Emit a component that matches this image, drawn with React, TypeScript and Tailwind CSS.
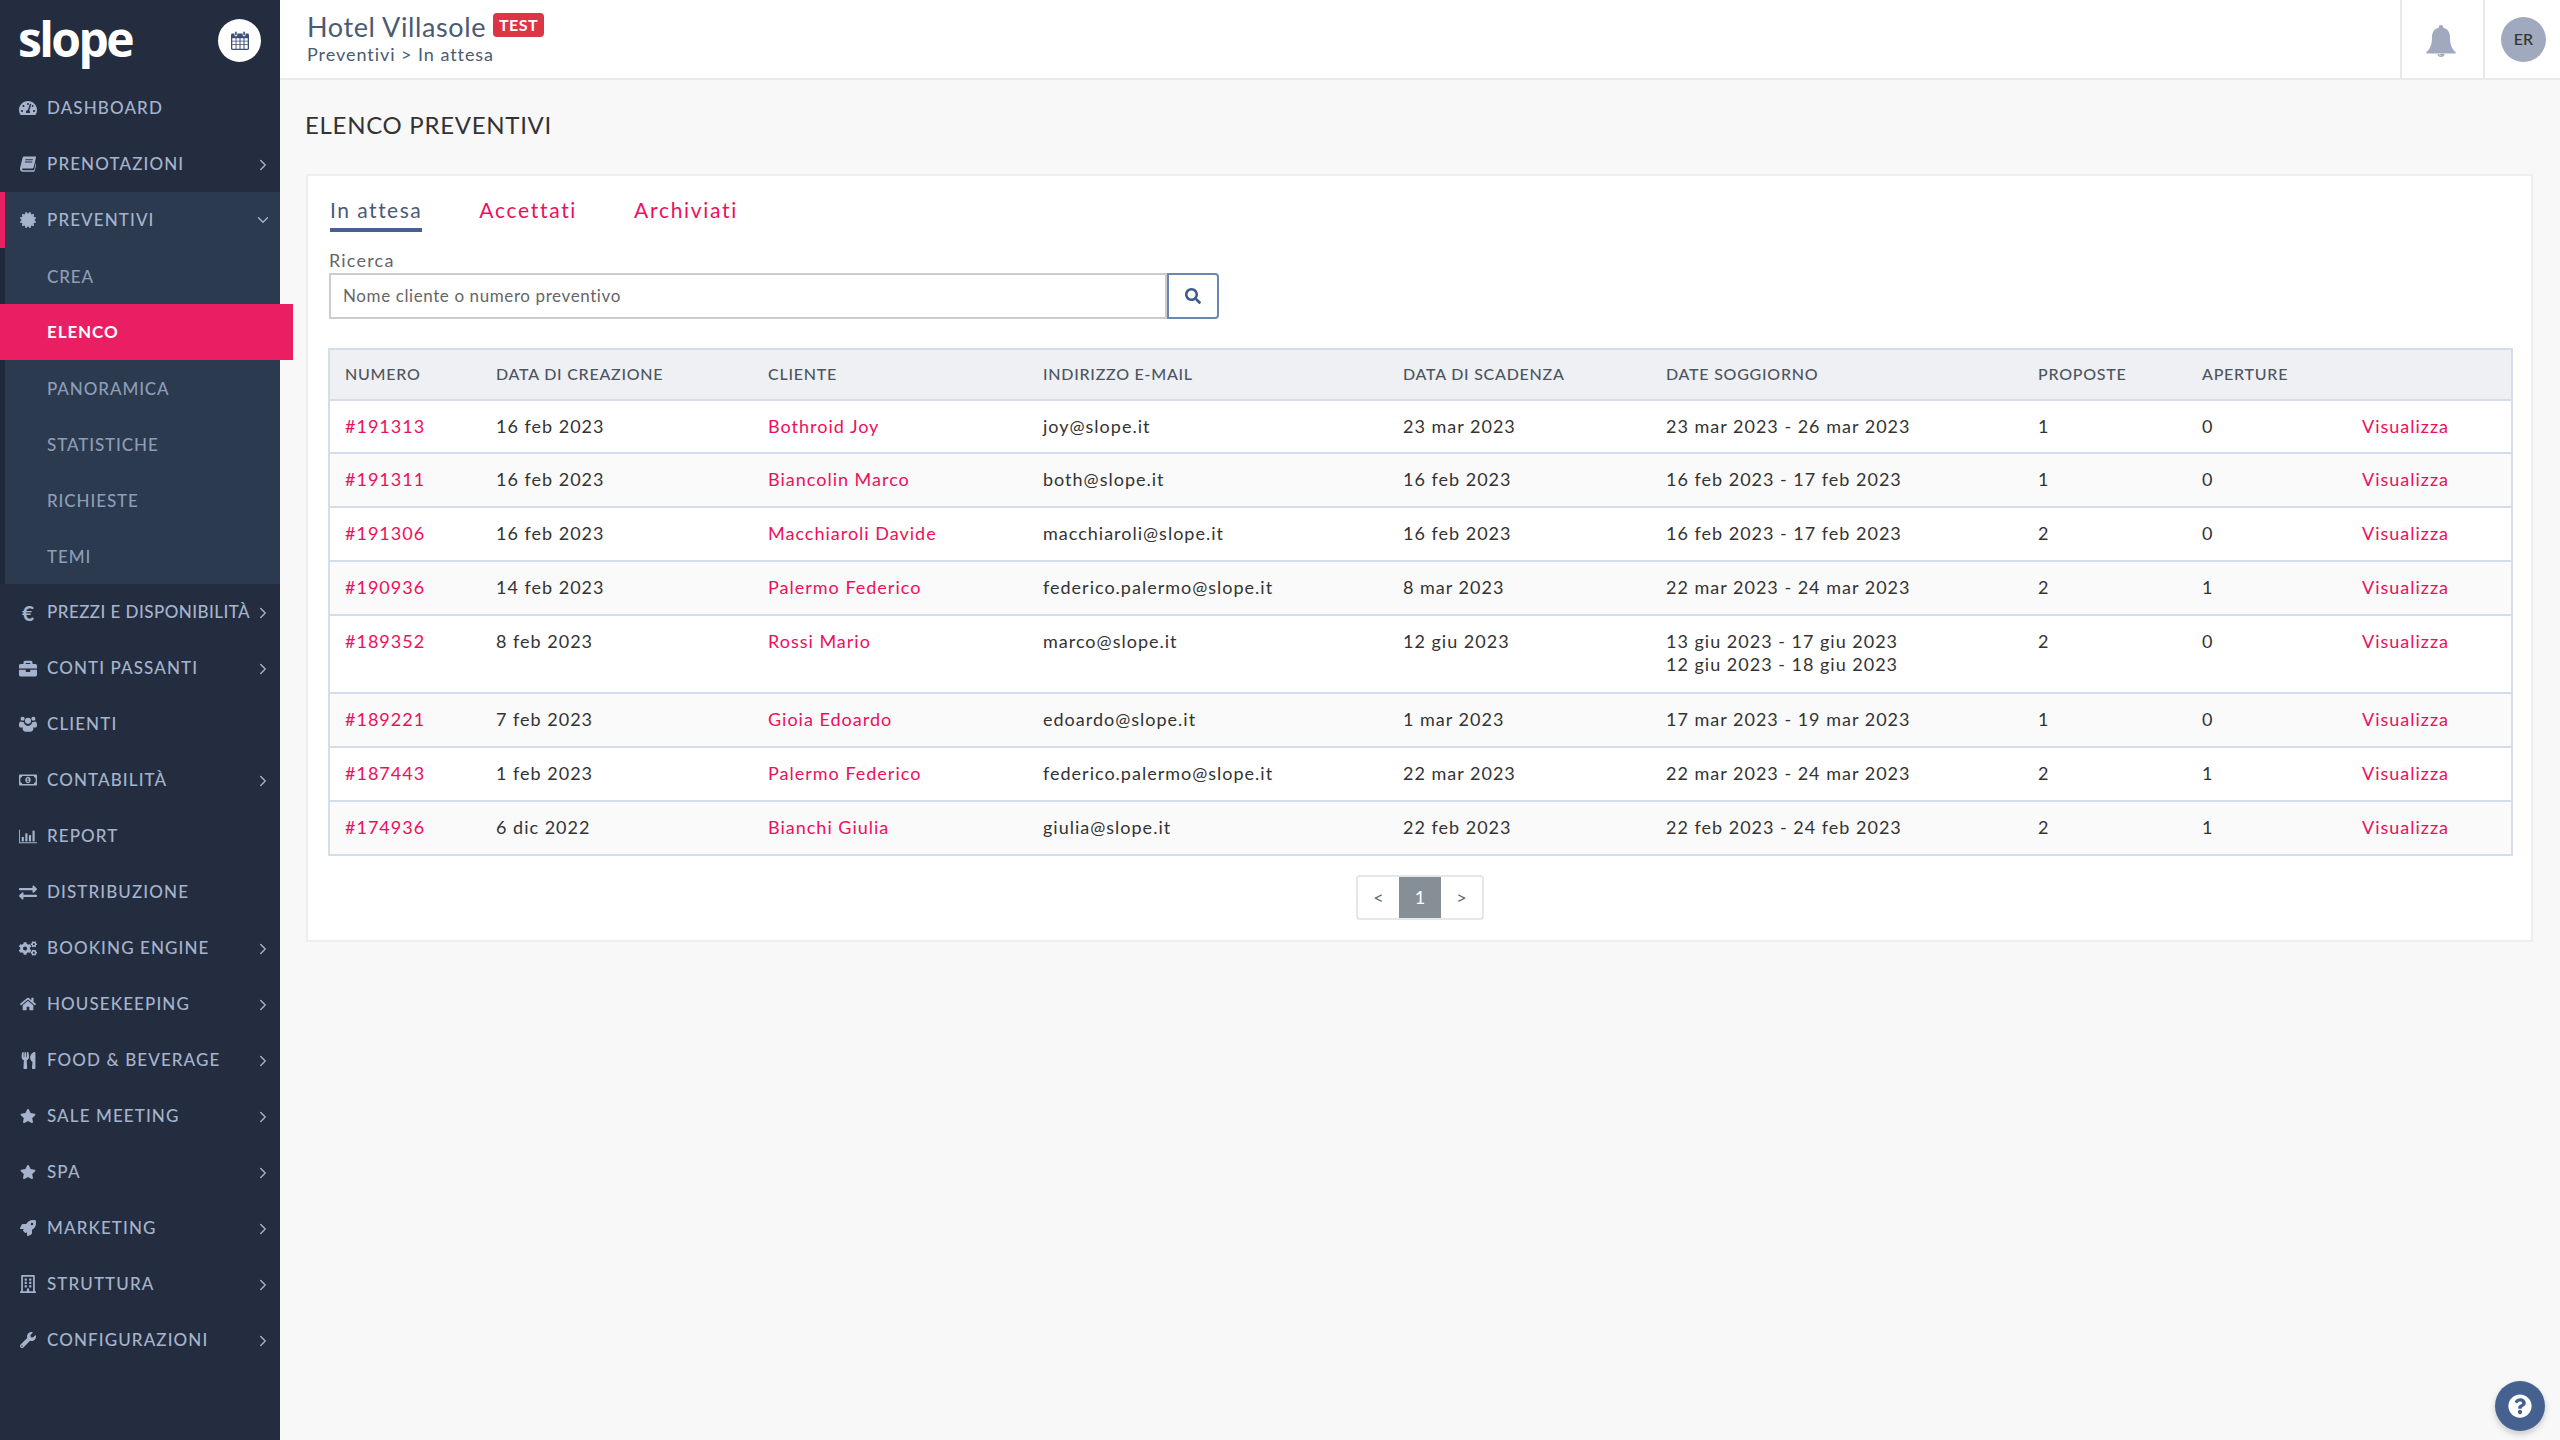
import React from "react";
import {
  FaTachometerAlt, FaCertificate, FaBriefcase, FaRegMoneyBillAlt, FaExchangeAlt,
  FaCogs, FaHome, FaUtensils, FaStar, FaRocket, FaRegBuilding, FaWrench, FaQuestionCircle, FaSearch,
} from "react-icons/fa";
import { ChevronRight, ChevronDown } from "lucide-react";

type IconT = React.ComponentType<{ className?: string }>;

function BarChartO({ className }: { className?: string }) {
  return (
    <svg viewBox="0 0 20 16" className={className} fill="currentColor">
      <path d="M0 1h1v14h19v1H0z" />
      <rect x="3" y="9" width="2.4" height="5" />
      <rect x="7" y="5" width="2.4" height="9" />
      <rect x="11" y="7" width="2.4" height="7" />
      <rect x="15" y="2" width="2.4" height="12" />
    </svg>
  );
}
function BookSlant({ className }: { className?: string }) {
  return (
    <svg viewBox="0 0 16 16" className={className} fill="currentColor">
      <path d="M4.2 0.5H15.5c.5 0 .6.4.5.8l-2.4 10.3c-.1.5-.5.8-1 .8H3.2c-1 0-1.4.5-1.2 1s.7.8 1.3.8h10.2c.4 0 .7-.3.8-.6l2-8.6.4.5c.2.2.3.5.2.8l-2.3 8.6c-.1.5-.6.9-1.1.9H2.9C1.4 15.6.2 14.5 0 13.2c-.1-.3 0-.7 0-1L2.6 1.8C2.8 1 3.4.5 4.2.5zM5.6 3.2l-.3 1h7.4l.3-1zM5 5.6l-.3 1h7.4l.3-1z" />
    </svg>
  );
}
function UsersFour({ className }: { className?: string }) {
  return (
    <svg viewBox="0 0 20 18" className={className} fill="currentColor">
      <circle cx="4" cy="3.2" r="2.3" />
      <circle cx="16" cy="3.2" r="2.3" />
      <circle cx="10" cy="5.5" r="3.4" />
      <path d="M0 10.2C0 7.6.8 6 2.2 6.2c.6.6 1.500.9 2.300.9.400 0 .8 0 1.100-.2-.1 1.100.4 2.200 1.100 3-1.300.500-2.200 1.700-2.500 3H1.200C.5 12.900 0 11.700 0 10.200z" />
      <path d="M20 10.200C20 7.600 19.200 6 17.800 6.200c-.6.600-1.500.9-2.300.9-.4 0-.8 0-1.100-.2.100 1.100-.4 2.200-1.100 3 1.300.5 2.200 1.700 2.500 3h3C19.500 12.900 20 11.700 20 10.200z" />
      <path d="M6.500 9.600c.9 1 2.100 1.500 3.500 1.500s2.600-.5 3.500-1.500c1.700.1 2.500 1.800 2.500 4.100 0 2.300-1.500 3.800-3.300 3.800H7.300C5.500 17.500 4 16 4 13.700c0-2.300.8-4 2.500-4.100z" />
    </svg>
  );
}
function EuroGlyph({ className }: { className?: string }) {
  return <span className={className}>€</span>;
}
function CalendarFa({ className }: { className?: string }) {
  return (
    <svg viewBox="0 0 18 19" className={className} fill="currentColor">
      <path fillRule="evenodd" d="M1.500 2.500H3.500v1.400c0 .8.600 1.400 1.400 1.400s1.400-.6 1.400-1.400V2.500h5.400v1.400c0 .8.600 1.400 1.400 1.400s1.400-.6 1.400-1.400V2.500h2c.8 0 1.500.7 1.500 1.500v13.500c0 .8-.7 1.500-1.500 1.500h-15C.7 19 0 18.300 0 17.500V4c0-.8.700-1.500 1.500-1.500zM1.300 7.300v2.400h3.300V7.300zm4.200 0v2.400h3v-2.400zm4 0v2.400h3v-2.400zm4 0v2.400h3.200V7.300zM1.300 10.600v2.600h3.300v-2.600zm4.200 0v2.600h3v-2.600zm4 0v2.600h3v-2.600zm4 0v2.600h3.200v-2.600zM1.300 14.100v3.600h3.300v-3.600zm4.200 0v3.600h3v-3.600zm4 0v3.600h3v-3.600zm4 0v3.600h3.200v-3.600z" />
      <rect x="4.100" y="0.500" width="1.600" height="4" rx="0.800" />
      <rect x="12.300" y="0.500" width="1.600" height="4" rx="0.800" />
    </svg>
  );
}
function BellFa({ className }: { className?: string }) {
  return (
    <svg viewBox="0 0 30 32" className={className} fill="currentColor">
      <circle cx="15" cy="2.400" r="2.300" />
      <path d="M15 2.500c5.500 0 9 3.800 9 9.500 0 7 1.500 11.500 5.500 15 .6.600.2 1.500-.6 1.500H1.100c-.8 0-1.200-.9-.6-1.500C4.500 23.500 6 19 6 12c0-5.700 3.500-9.500 9-9.500z" />
      <path d="M11.500 29h7c0 1.800-1.500 3-3.500 3s-3.500-1.200-3.500-3z" />
      <path d="M15 30.800c-1.200 0-2.200-.7-2.400-1.800h.9c.2.600.800 1 1.500 1z" fill="#e8ebf0" />
    </svg>
  );
}

type Item = { label: string; icon: IconT; arrow?: boolean; size: string; track?: string };

const before: Item[] = [
  { label: "DASHBOARD", icon: FaTachometerAlt, size: "w-[18px] h-[18px]" },
  { label: "PRENOTAZIONI", icon: BookSlant, arrow: true, size: "w-[16px] h-[16px]" },
];
const after: Item[] = [
  { label: "PREZZI E DISPONIBILITÀ", icon: EuroGlyph, arrow: true, size: "text-[21px] font-bold leading-none", track: "tracking-[0.45px]" },
  { label: "CONTI PASSANTI", icon: FaBriefcase, arrow: true, size: "w-[19px] h-[19px]" },
  { label: "CLIENTI", icon: UsersFour, size: "w-[19px] h-[18px]" },
  { label: "CONTABILITÀ", icon: FaRegMoneyBillAlt, arrow: true, size: "w-[20px] h-[20px]" },
  { label: "REPORT", icon: BarChartO, size: "w-[20px] h-[16px]" },
  { label: "DISTRIBUZIONE", icon: FaExchangeAlt, size: "w-[19px] h-[19px]" },
  { label: "BOOKING ENGINE", icon: FaCogs, arrow: true, size: "w-[19px] h-[19px]" },
  { label: "HOUSEKEEPING", icon: FaHome, arrow: true, size: "w-[16px] h-[16px]" },
  { label: "FOOD & BEVERAGE", icon: FaUtensils, arrow: true, size: "w-[15px] h-[17px]" },
  { label: "SALE MEETING", icon: FaStar, arrow: true, size: "w-[16px] h-[16px]" },
  { label: "SPA", icon: FaStar, arrow: true, size: "w-[16px] h-[16px]" },
  { label: "MARKETING", icon: FaRocket, arrow: true, size: "w-[16px] h-[16px]" },
  { label: "STRUTTURA", icon: FaRegBuilding, arrow: true, size: "w-[18px] h-[18px]" },
  { label: "CONFIGURAZIONI", icon: FaWrench, arrow: true, size: "w-[16px] h-[16px]" },
];

function MenuRow({ item }: { item: Item }) {
  const Icon = item.icon;
  return (
    <div className="flex h-14 items-center pl-[19px] pr-[8px] text-[#a6b3cc]">
      <span className="flex w-[18px] shrink-0 items-center justify-center">
        <Icon className={item.size} />
      </span>
      <span className={`ml-[10px] flex-1 whitespace-nowrap text-[17px] font-medium ${item.track ?? "tracking-[1.1px]"}`}>{item.label}</span>
      {item.arrow && <ChevronRight className="mt-[2px] h-[18px] w-[18px] shrink-0" strokeWidth={1.8} />}
    </div>
  );
}

const subs = ["CREA", "ELENCO", "PANORAMICA", "STATISTICHE", "RICHIESTE", "TEMI"];

const rows = [
  { n: "#191313", d: "16 feb 2023", c: "Bothroid Joy", e: "joy@slope.it", s: "23 mar 2023", g: ["23 mar 2023 - 26 mar 2023"], p: "1", a: "0", h: "h-[53px]" },
  { n: "#191311", d: "16 feb 2023", c: "Biancolin Marco", e: "both@slope.it", s: "16 feb 2023", g: ["16 feb 2023 - 17 feb 2023"], p: "1", a: "0", h: "h-[54px]" },
  { n: "#191306", d: "16 feb 2023", c: "Macchiaroli Davide", e: "macchiaroli@slope.it", s: "16 feb 2023", g: ["16 feb 2023 - 17 feb 2023"], p: "2", a: "0", h: "h-[54px]" },
  { n: "#190936", d: "14 feb 2023", c: "Palermo Federico", e: "federico.palermo@slope.it", s: "8 mar 2023", g: ["22 mar 2023 - 24 mar 2023"], p: "2", a: "1", h: "h-[54px]" },
  { n: "#189352", d: "8 feb 2023", c: "Rossi Mario", e: "marco@slope.it", s: "12 giu 2023", g: ["13 giu 2023 - 17 giu 2023", "12 giu 2023 - 18 giu 2023"], p: "2", a: "0", h: "h-[78px]" },
  { n: "#189221", d: "7 feb 2023", c: "Gioia Edoardo", e: "edoardo@slope.it", s: "1 mar 2023", g: ["17 mar 2023 - 19 mar 2023"], p: "1", a: "0", h: "h-[54px]" },
  { n: "#187443", d: "1 feb 2023", c: "Palermo Federico", e: "federico.palermo@slope.it", s: "22 mar 2023", g: ["22 mar 2023 - 24 mar 2023"], p: "2", a: "1", h: "h-[54px]" },
  { n: "#174936", d: "6 dic 2022", c: "Bianchi Giulia", e: "giulia@slope.it", s: "22 feb 2023", g: ["22 feb 2023 - 24 feb 2023"], p: "2", a: "1", h: "h-[54px]" },
];

const heads = [
  { t: "NUMERO", w: "w-[152px]" },
  { t: "DATA DI CREAZIONE", w: "w-[272px]" },
  { t: "CLIENTE", w: "w-[275px]" },
  { t: "INDIRIZZO E-MAIL", w: "w-[360px]" },
  { t: "DATA DI SCADENZA", w: "w-[263px]" },
  { t: "DATE SOGGIORNO", w: "w-[372px]" },
  { t: "PROPOSTE", w: "w-[164px]" },
  { t: "APERTURE", w: "w-[160px]" },
  { t: "", w: "w-[165px]" },
];

const td = "px-[15px] pb-[7px] pt-[14px] align-top border-t-2 border-[#d3deeb]";

export default function App() {
  return (
    <div className="flex h-screen overflow-hidden bg-[#f8f8f8] font-['Lato','Liberation_Sans',sans-serif]">
      <aside className="relative z-10 h-full w-[280px] shrink-0 bg-[#232d3f]">
        <div className="flex h-20 items-center justify-between pl-[18px] pr-[19px]">
          <span className="-mt-[2px] text-[48px] font-bold leading-none tracking-[-2.6px] text-white font-['Open_Sans','Lato',sans-serif]">slope</span>
          <span className="flex h-[43px] w-[43px] items-center justify-center rounded-full bg-white text-[#3f5078]">
            <CalendarFa className="h-[19px] w-[18px]" />
          </span>
        </div>
        {before.map((i) => <MenuRow key={i.label} item={i} />)}
        <div className="border-l-[5px] border-[#1f2a3a] bg-[#2b3a4f]">
          <div className="-ml-[5px] flex h-14 items-center border-l-[5px] border-[#e91e63] pl-[14px] pr-[8px] text-[#a6b3cc]">
            <span className="flex w-[18px] shrink-0 items-center justify-center"><FaCertificate className="h-[16px] w-[16px]" /></span>
            <span className="ml-[10px] flex-1 text-[17px] font-medium tracking-[1.1px]">PREVENTIVI</span>
            <ChevronDown className="h-[18px] w-[18px]" strokeWidth={1.8} />
          </div>
          {subs.map((s) =>
            s === "ELENCO" ? (
              <div key={s} className="-ml-[5px] flex h-14 w-[293px] items-center bg-[#e91e63] pl-[47px] text-[17px] font-bold tracking-[0.9px] text-white">{s}</div>
            ) : (
              <div key={s} className="flex h-14 items-center pl-[42px] pt-[2px] text-[17px] font-medium tracking-[0.9px] text-[#8e9db5]">{s}</div>
            )
          )}
        </div>
        {after.map((i) => <MenuRow key={i.label} item={i} />)}
      </aside>

      <div className="flex h-full min-w-0 flex-1 flex-col">
        <header className="flex h-20 shrink-0 items-stretch justify-between border-b-2 border-[#e9e9e9] bg-white">
          <div className="pl-[27px] pt-[10px] text-[#4a5a73]">
            <div className="flex items-start">
              <span className="text-[27px] leading-[34px] tracking-[0.6px]">Hotel Villasole</span>
              <span className="ml-[7px] mt-[3px] rounded-[4px] bg-[#dc3545] px-[6px] text-[16px] font-bold leading-[24px] tracking-[0.5px] text-white">TEST</span>
            </div>
            <div className="text-[18px] leading-[20px] tracking-[0.95px]">Preventivi &gt; In attesa</div>
          </div>
          <div className="flex">
            <div className="flex w-[83px] items-center justify-center border-l-2 border-[#e9e9e9] pr-[3px] text-[#a0a9bd]">
              <BellFa className="mt-[3px] h-[32px] w-[30px]" />
            </div>
            <div className="flex w-[77px] items-center border-l-2 border-[#e9e9e9] pl-[16px]">
              <span className="flex h-[45px] w-[45px] items-center justify-center rounded-full bg-[#a0a9bd] text-[16px] font-medium text-[#333]">ER</span>
            </div>
          </div>
        </header>

        <main className="flex-1 pl-[26px] pr-[27px]">
          <h1 className="-ml-[1px] pt-[30px] text-[24px] leading-[30px] tracking-[0.7px] text-[#333]">ELENCO PREVENTIVI</h1>
          <section className="mt-[34px] h-[768px] border-2 border-[#eeeeee] bg-white pl-[21px] pr-[20px] pt-[19px]">
            <div className="flex text-[21px] leading-[30px] tracking-[1.7px]">
              <span className="ml-[1px] border-b-4 border-[#47618f] pb-[3px] tracking-[1.5px] text-[#4a5a73]">In attesa</span>
              <span className="ml-[57px] text-[#ee0f5c]">Accettati</span>
              <span className="ml-[57px] text-[#ee0f5c]">Archiviati</span>
            </div>
            <div className="mt-[17px] text-[18px] leading-[22px] tracking-[1.2px] text-[#666]">Ricerca</div>
            <div className="mt-[2px] flex h-[46px] w-[890px]">
              <div className="flex flex-1 items-center border-2 border-[#cccccc] pl-[12px] text-[17px] tracking-[0.6px] text-[#666]">Nome cliente o numero preventivo</div>
              <div className="flex w-[52px] items-center justify-center rounded-r-[4px] border-2 border-[#6a86b4] text-[#3f5a88]"><FaSearch className="h-[16px] w-[16px]" /></div>
            </div>
            <table className="-ml-[1px] mt-[29px] w-[2183px] table-fixed border-collapse border-2 border-[#d3deeb] text-[18px] leading-[23px] tracking-[1px] tabular-nums text-[#333]">
              <thead>
                <tr className="h-[51px] bg-[#eef0f4]">
                  {heads.map((h, i) => (
                    <th key={i} className={`${h.w} px-[15px] pb-[2px] text-left text-[16px] font-medium tracking-[0.75px] text-[#4d5560]`}>{h.t}</th>
                  ))}
                </tr>
              </thead>
              <tbody>
                {rows.map((r, i) => (
                  <tr key={r.n} className={`${r.h} ${i % 2 ? "bg-[#fafafa]" : "bg-white"}`}>
                    <td className={td + " text-[#ee0f5c]"}>{r.n}</td>
                    <td className={td}>{r.d}</td>
                    <td className={td + " text-[#ee0f5c]"}>{r.c}</td>
                    <td className={td}>{r.e}</td>
                    <td className={td}>{r.s}</td>
                    <td className={td}>{r.g.map((x) => <div key={x}>{x}</div>)}</td>
                    <td className={td}>{r.p}</td>
                    <td className={td}>{r.a}</td>
                    <td className={td + " text-[#ee0f5c]"}>Visualizza</td>
                  </tr>
                ))}
              </tbody>
            </table>
            <div className="mt-[19px] flex justify-center">
              <div className="flex h-[45px] overflow-hidden rounded-[4px] border-2 border-[#e3e6ea] text-[18px]">
                <span className="flex w-[41px] items-center justify-center text-[#5a6472]">&lt;</span>
                <span className="flex w-[42px] items-center justify-center bg-[#868e96] text-white">1</span>
                <span className="flex w-[41px] items-center justify-center text-[#5a6472]">&gt;</span>
              </div>
            </div>
          </section>
        </main>
      </div>

      <button className="absolute bottom-[9px] right-[15px] flex h-[50px] w-[50px] items-center justify-center rounded-full bg-[#45618f] text-white shadow-[0_3px_6px_rgba(0,0,0,0.2)]">
        <FaQuestionCircle className="h-[24px] w-[24px]" />
      </button>
    </div>
  );
}
